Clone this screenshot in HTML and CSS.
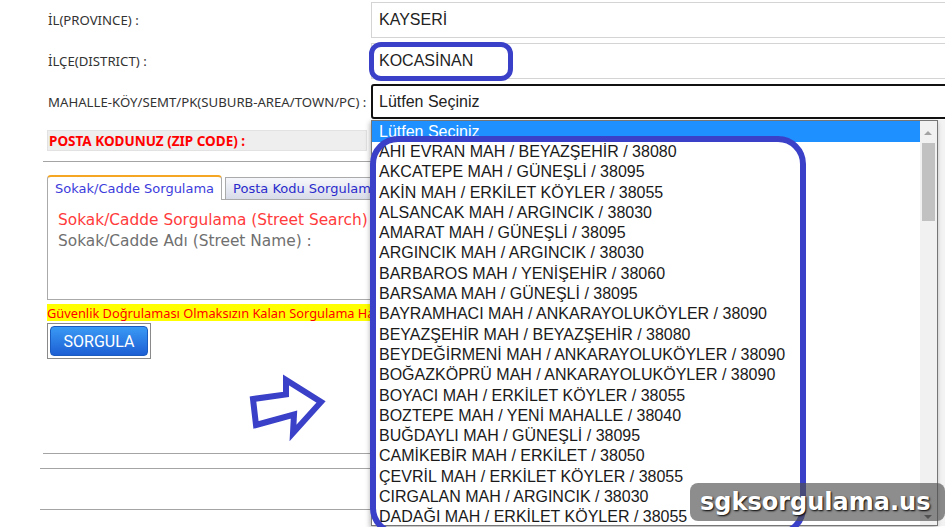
FILE: index.html
```html
<!DOCTYPE html>
<html lang="tr">
<head>
  <meta charset="UTF-8">
  <meta name="viewport" content="width=device-width, initial-scale=1.0">
  <title>Posta Kodu Sorgulama</title>
  <link rel="stylesheet" href="styles.css">
</head>
<body>
  <div class="page">
    <div class="address">
      <div class="row">
        <span class="label">İL(PROVINCE) :</span>
        <div class="field">KAYSERİ</div>
      </div>
      <div class="row">
        <span class="label">İLÇE(DISTRICT) :</span>
        <div class="field">KOCASİNAN</div>
      </div>
      <div class="row">
        <span class="label">MAHALLE-KÖY/SEMT/PK(SUBURB-AREA/TOWN/PC) :</span>
        <div class="field select">Lütfen Seçiniz</div>
      </div>
      <div class="row zip">
        <span class="zip-label">POSTA KODUNUZ (ZIP CODE) :</span>
      </div>
    </div>

    <hr class="rule rule-top">

    <div class="search">
      <div class="tabs">
        <div class="tab active">Sokak/Cadde Sorgulama</div>
        <div class="tab">Posta Kodu Sorgulama</div>
      </div>
      <div class="panel">
        <div class="panel-title">Sokak/Cadde Sorgulama (Street Search)</div>
        <div class="panel-text">Sokak/Cadde Adı (Street Name) :</div>
      </div>
      <div class="notice">Güvenlik Doğrulaması Olmaksızın Kalan Sorgulama Hakkınız</div>
      <div class="btn-wrap">
        <button class="btn">SORGULA</button>
      </div>
    </div>

    <hr class="rule rule-a">
    <hr class="rule rule-b">
    <hr class="rule rule-c">
  </div>

  <!-- open list of the neighbourhood select -->
  <div class="options">
    <ul class="options-list">
      <li class="selected">Lütfen Seçiniz</li>
      <li>AHI EVRAN MAH / BEYAZŞEHİR / 38080</li>
      <li>AKCATEPE MAH / GÜNEŞLİ / 38095</li>
      <li>AKİN MAH / ERKİLET KÖYLER / 38055</li>
      <li>ALSANCAK MAH / ARGINCIK / 38030</li>
      <li>AMARAT MAH / GÜNEŞLİ / 38095</li>
      <li>ARGINCIK MAH / ARGINCIK / 38030</li>
      <li>BARBAROS MAH / YENİŞEHİR / 38060</li>
      <li>BARSAMA MAH / GÜNEŞLİ / 38095</li>
      <li>BAYRAMHACI MAH / ANKARAYOLUKÖYLER / 38090</li>
      <li>BEYAZŞEHİR MAH / BEYAZŞEHİR / 38080</li>
      <li>BEYDEĞİRMENİ MAH / ANKARAYOLUKÖYLER / 38090</li>
      <li>BOĞAZKÖPRÜ MAH / ANKARAYOLUKÖYLER / 38090</li>
      <li>BOYACI MAH / ERKİLET KÖYLER / 38055</li>
      <li>BOZTEPE MAH / YENİ MAHALLE / 38040</li>
      <li>BUĞDAYLI MAH / GÜNEŞLİ / 38095</li>
      <li>CAMİKEBİR MAH / ERKİLET / 38050</li>
      <li>ÇEVRİL MAH / ERKİLET KÖYLER / 38055</li>
      <li>CIRGALAN MAH / ARGINCIK / 38030</li>
      <li>DADAĞI MAH / ERKİLET KÖYLER / 38055</li>
    </ul>
    <div class="scrollbar">
      <span class="arrow-up"></span>
      <span class="thumb"></span>
      <span class="arrow-down"></span>
    </div>
  </div>

  <!-- highlight marks -->
  <div class="mark mark-district"></div>
  <div class="mark mark-list"></div>
  <svg class="pointer" width="90" height="75" viewBox="0 0 90 75">
    <polygon points="8,29 41,24.5 41,10 76,32 48,63 49,44.5 11,55" fill="none" stroke="#3a40c8" stroke-width="6" stroke-linejoin="miter"/>
  </svg>

  <div class="watermark">sgksorgulama.us</div>
</body>
</html>
```

FILE: styles.css
```css
body {
  margin: 0;
  background-color: #fff;
  width: 945px;
  height: 527px;
  overflow: hidden;
  position: relative;
}
.page {
  width: 945px;
}
.address {
  padding: 2px 0 0 47px;
}
.row {
  display: grid;
  grid-template-columns: 324px 600px;
  align-items: center;
  margin-bottom: 5px;
}
.label {
  font: 13.2px "Noto Sans", sans-serif;
  color: #333;
  padding-left: 1px;
}
.field {
  height: 36px;
  box-sizing: border-box;
  border: 1px solid #d4d4d4;
  padding-left: 7px;
  display: flex;
  align-items: center;
  font: 16px "Liberation Sans", Arial, sans-serif;
  color: #222;
}
.select {
  height: 35px;
  border: 2px solid #111;
  border-radius: 3px;
  padding-left: 6px;
}
.zip {
  margin-top: 11px;
}
.zip-label {
  width: 320px;
  height: 21px;
  box-sizing: border-box;
  background-color: #eee;
  border: 1px solid #e2e2e2;
  padding-left: 1px;
  display: flex;
  align-items: center;
  font: bold 13.5px "Noto Sans", sans-serif;
  color: #f00;
}
.rule {
  border: 0;
  border-top: 1px solid #a4a4a4;
  height: 0;
  margin: 0;
}
.rule-top {
  margin: 10px 0 0 43px;
}
.search {
  margin: 13px 0 0 47px;
}
.tabs {
  display: flex;
  align-items: flex-end;
  gap: 3px;
  height: 24px;
}
.tab {
  box-sizing: border-box;
  height: 22px;
  border: 1px solid #aaa;
  border-bottom: 0;
  padding: 0 7px;
  display: flex;
  align-items: center;
  font: 13px "DejaVu Sans", Verdana, sans-serif;
  color: #2b2bcc;
  background: linear-gradient(#f6f7fb, #d8dce8);
}
.tab.active {
  height: 25px;
  margin-bottom: -1px;
  border-top: 2px solid #f5a623;
  border-radius: 4px 4px 0 0;
  background: #fff;
  color: #3c3cdc;
  position: relative;
}
.panel {
  width: 880px;
  height: 101px;
  box-sizing: border-box;
  border: 1px solid #aaa;
  padding: 10px 10px;
  font: 15.4px "DejaVu Sans", Verdana, sans-serif;
  line-height: 21px;
}
.panel-title {
  color: #ff3b3b;
}
.panel-text {
  color: #707070;
}
.notice {
  margin-top: 4px;
  width: 880px;
  height: 17px;
  line-height: 17px;
  background-color: #ff0;
  color: #f00;
  font: 12.8px "Noto Sans", sans-serif;
  white-space: nowrap;
}
.btn-wrap {
  display: inline-block;
  margin-top: 2px;
  border: 1px solid #8a8a8a;
  padding: 2px;
}
.btn {
  display: block;
  width: 98px;
  height: 30px;
  border: 1px solid #1a5bbf;
  border-radius: 4px;
  background: linear-gradient(#3a9af5, #1c5fd4);
  color: #fff;
  font: 16px Roboto, "Liberation Sans", Arial, sans-serif;
}
.rule-a {
  margin: 94px 0 0 43px;
}
.rule-b {
  margin: 14px 0 0 40px;
}
.rule-c {
  margin: 40px 0 0 40px;
}

/* open dropdown */
.options {
  position: absolute;
  left: 371px;
  top: 120px;
  width: 567px;
  height: 406px;
  box-sizing: border-box;
  background-color: #fff;
  border: 1px solid #767676;
  box-shadow: -1px 2px 5px rgba(0, 0, 0, 0.3), 8px 0 0 #f3f3f3;
  display: flex;
}
.options-list {
  flex: 1;
  list-style: none;
  margin: 0;
  padding: 0;
  font: 16px "Liberation Sans", Arial, sans-serif;
  color: #1a1a1a;
  overflow: hidden;
}
.options-list li {
  height: 20.3px;
  line-height: 20.3px;
  padding-left: 7px;
  white-space: nowrap;
}
.options-list li.selected {
  height: 21px;
  line-height: 22px;
  background-color: #1e90ff;
  color: #fff;
}
.scrollbar {
  width: 17px;
  background-color: #f1f1f1;
  position: relative;
}
.arrow-up, .arrow-down {
  position: absolute;
  left: 4px;
  width: 0;
  height: 0;
  border-left: 4px solid transparent;
  border-right: 4px solid transparent;
}
.arrow-up {
  top: 10px;
  border-bottom: 4px solid #a3a3a3;
}
.arrow-down {
  bottom: 6px;
  border-top: 4px solid #505050;
}
.thumb {
  position: absolute;
  left: 2px;
  right: 2px;
  top: 22px;
  height: 78px;
  background-color: #c1c1c1;
}

/* annotations */
.mark {
  position: absolute;
  box-sizing: border-box;
  border: 5px solid #3a40c8;
}
.mark-district {
  left: 369px;
  top: 42px;
  width: 144px;
  height: 39px;
  border-radius: 12px;
}
.mark-list {
  left: 370px;
  top: 136px;
  width: 436px;
  height: 400px;
  border-width: 6px;
  border-radius: 28px;
}
.pointer {
  position: absolute;
  left: 245px;
  top: 370px;
}
.watermark {
  position: absolute;
  left: 690px;
  top: 483px;
  width: 255px;
  height: 38px;
  box-sizing: border-box;
  padding-left: 10px;
  border-radius: 8px;
  background-color: rgba(80, 80, 80, 0.65);
  color: #fff;
  font: bold 24px "DejaVu Sans", Verdana, sans-serif;
  line-height: 38px;
  text-shadow: 1px 1px 2px #000;
  white-space: nowrap;
}
```
